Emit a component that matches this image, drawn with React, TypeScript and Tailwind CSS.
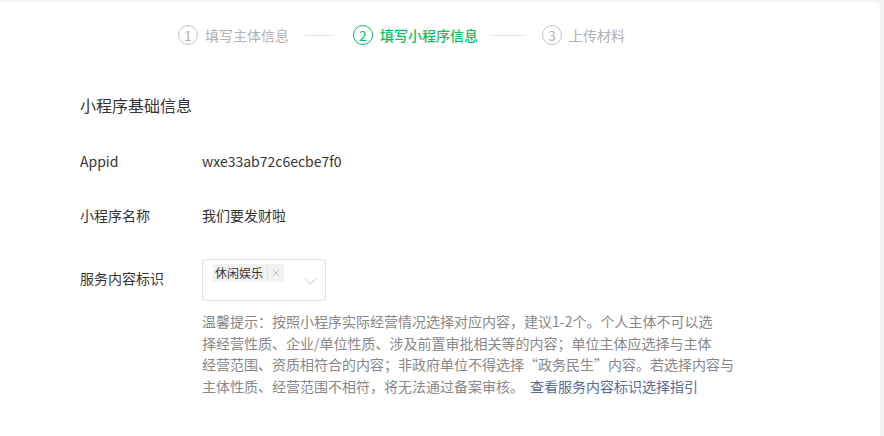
const FONT = "font-['Noto_Sans_CJK_SC','Noto_Sans',sans-serif]";

function Step({ n, label, active }: { n: number; label: string; active?: boolean }) {
  return (
    <div className="flex items-center">
      <span
        className={`flex h-[20px] w-[20px] items-center justify-center rounded-full border text-[14px] leading-none ${
          active ? "border-[#07c160] text-[#07c160]" : "border-[#c4c4c4] text-[#b2b2b2]"
        }`}
      >
        {n}
      </span>
      <span
        className={`ml-[7px] text-[14px] leading-[20px] ${
          active ? "font-medium text-[#07c160]" : "text-[#b2b2b2]"
        }`}
      >
        {label}
      </span>
    </div>
  );
}

function Row({ label, children, className = "" }: { label: string; children: React.ReactNode; className?: string }) {
  return (
    <div className={`flex ${className}`}>
      <div className="w-[122px] shrink-0 text-[14px] leading-[22px] text-[#353535]">{label}</div>
      <div className="flex-1 text-[14px] leading-[22px] text-[#353535]">{children}</div>
    </div>
  );
}

const HINT = [
  "温馨提示：按照小程序实际经营情况选择对应内容，建议1-2个。个人主体不可以选",
  "择经营性质、企业/单位性质、涉及前置审批相关等的内容；单位主体应选择与主体",
  "经营范围、资质相符合的内容；非政府单位不得选择“政务民生”内容。若选择内容与",
];

export default function App() {
  return (
    <div className={`min-h-[436px] w-[884px] bg-[#f4f4f6] pt-[2px] ${FONT}`}>
      <div className="h-[434px] w-[880px] rounded-tr-[5px] bg-white">
        {/* steps */}
        <div className="flex items-center pl-[178px] pt-[23px]">
          <Step n={1} label="填写主体信息" />
          <div className="ml-[16px] mr-[20px] h-px w-[28px] bg-[#e2e2e2]" />
          <Step n={2} label="填写小程序信息" active />
          <div className="ml-[14px] mr-[18px] h-px w-[32px] bg-[#e2e2e2]" />
          <Step n={3} label="上传材料" />
        </div>

        <div className="pl-[80px]">
          <h2 className="mt-[48px] text-[16px] leading-[24px] text-[#353535]">小程序基础信息</h2>

          <Row label="Appid" className="mt-[33px]">
            wxe33ab72c6ecbe7f0
          </Row>

          <Row label="小程序名称" className="mt-[32px]">
            我们要发财啦
          </Row>

          <Row label="服务内容标识" className="mt-[41px]">
            <div className="-mt-[8px] flex h-[42px] w-[124px] items-start justify-between rounded-[4px] border border-[#e4e4e4] pl-[10px] pr-[8px] pt-[4px]">
              <span className="flex h-[18px] items-center bg-[#f2f2f2] pl-[2px] text-[12px] leading-[18px] text-[#353535]">
                休闲娱乐
                <span className="ml-[4px] h-[14px] w-px bg-[#e0e0e0]" />
                <svg viewBox="0 0 10 10" className="mx-[4px] h-[8px] w-[8px]" fill="none" stroke="#b2b2b2" strokeWidth="1">
                  <path d="M1 1l8 8M9 1l-8 8" />
                </svg>
              </span>
              <svg viewBox="0 0 14 8" className="mt-[14px] h-[7px] w-[13px]" fill="none" stroke="#b8b8b8" strokeWidth="1">
                <path d="M1 1l6 6 6-6" />
              </svg>
            </div>
            <div className="mt-[10px] text-[14px] leading-[21.5px] text-[#888888]">
              {HINT.map((line) => (
                <p key={line} className="whitespace-nowrap">
                  {line}
                </p>
              ))}
              <p className="whitespace-nowrap">
                主体性质、经营范围不相符，将无法通过备案审核。
                <span className="ml-[6px] text-[#576b95]">查看服务内容标识选择指引</span>
              </p>
            </div>
          </Row>
        </div>
      </div>
    </div>
  );
}
